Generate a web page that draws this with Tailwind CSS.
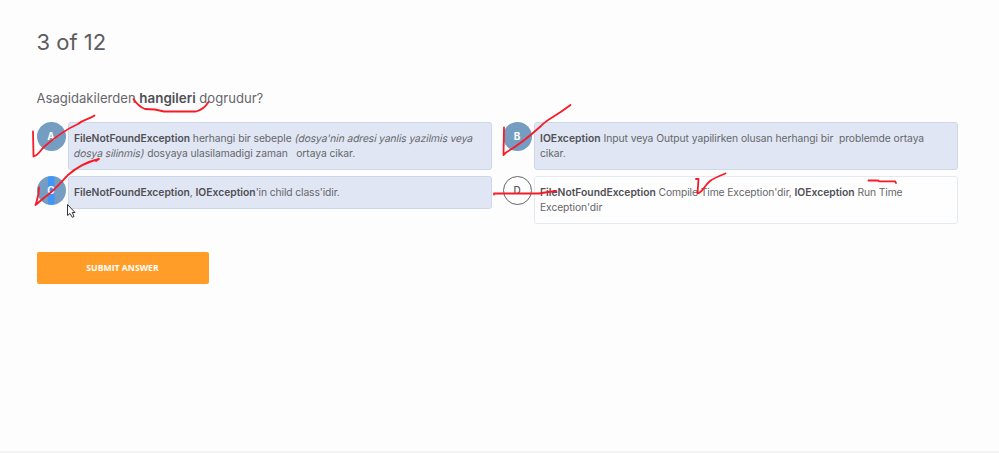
<!DOCTYPE html>
<html lang="tr">
<head>
<meta charset="utf-8">
<title>Quiz</title>
<script src="https://cdn.jsdelivr.net/npm/@tailwindcss/browser@4"></script>
</head>
<body class="bg-[#fdfdfd] font-['Inter',sans-serif] text-[#66666b]">
<main class="relative flex h-[453px] w-[999px] flex-col overflow-hidden border-b-2 border-[#f4f4f4] pl-[36.500px] pr-[41px] pt-[26px]">
  <h1 class="h-8 text-[22px] leading-8 whitespace-nowrap text-[#5c5c61]">3 of 12</h1>
  <p class="mt-[30px] h-5 text-[13.1px] leading-5 whitespace-nowrap">Asagidakilerden <b class="text-[13.4px] font-semibold text-[#505055]">hangileri</b> dogrudur?</p>

  <section class="mt-[14px] grid grid-cols-[455.500px_455.500px] gap-x-[10.500px] gap-y-[6px] text-[10.3px] leading-[14.5px] tracking-[-0.055px]">
    <div class="flex items-start gap-[2.500px]">
      <span class="flex size-[29px] shrink-0 items-center justify-center rounded-full bg-[#749dc1] text-[10px] font-bold text-white">A</span>
      <div class="h-12 flex-1 rounded-[3px] border border-[#cbd8e8] bg-[#e0e6f3] pl-[5px] pt-[8px] whitespace-nowrap"><b class="font-semibold tracking-[0.02px] text-[#505055]">FileNotFoundException</b> herhangi bir sebeple <i class="inline-block -skew-x-12 not-italic tracking-[-0.11px]">(dosya'nin adresi yanlis yazilmis veya</i><br><i class="inline-block -skew-x-12 not-italic tracking-[-0.11px]">dosya silinmis)</i> dosyaya ulasilamadigi zaman &nbsp; ortaya cikar.</div>
    </div>
    <div class="flex items-start gap-[2.500px]">
      <span class="flex size-[29px] shrink-0 items-center justify-center rounded-full bg-[#749dc1] text-[10px] font-bold text-white">B</span>
      <div class="h-12 flex-1 rounded-[3px] border border-[#cbd8e8] bg-[#e0e6f3] pl-[5px] pt-[8px] whitespace-nowrap"><b class="font-semibold tracking-[0.05px] text-[#505055]">IOException</b> Input veya Output yapilirken olusan herhangi bir &nbsp;problemde ortaya<br>cikar.</div>
    </div>
    <div class="flex items-start gap-[2.500px]">
      <span class="flex size-[29px] shrink-0 items-center justify-center rounded-full bg-[linear-gradient(90deg,#749dc1_36%,#4294f5_39%,#4294f5_59%,#749dc1_62%)] text-[10px] font-bold text-white">C</span>
      <div class="h-[33px] flex-1 rounded-[3px] border border-[#cbd8e8] bg-[#e0e6f3] pl-[5px] pt-[8px] tracking-[-0.11px] whitespace-nowrap"><b class="font-semibold tracking-[0.01px] text-[#505055]">FileNotFoundException</b>, <b class="font-semibold tracking-[0.01px] text-[#505055]">IOException</b>'in child class'idir.</div>
    </div>
    <div class="flex items-start gap-[2.500px]">
      <span class="flex size-[29px] shrink-0 items-center justify-center rounded-full border border-[#65656a] text-[10px] font-medium text-[#55555a]">D</span>
      <div class="h-12 flex-1 rounded-[3px] border border-[#e4eaf2] bg-[#fefefe] pl-[5px] pt-[8px] tracking-[-0.1px] whitespace-nowrap"><b class="font-semibold tracking-[0.01px] text-[#505055]">FileNotFoundException</b> Compile Time Exception'dir, <b class="font-semibold tracking-[0.01px] text-[#505055]">IOException</b> Run Time<br>Exception'dir</div>
    </div>
  </section>

  <button class="mt-[28px] h-8 w-[172px] rounded-[2px] bg-[#ff9d28] pt-px font-['Open_Sans',sans-serif] text-[8.7px] font-bold text-white">SUBMIT ANSWER</button>

  <!-- Pen annotations and pointer -->
  <svg class="pointer-events-none absolute left-0 top-0" width="999" height="453" viewBox="0 0 999 453" fill="none">
    <g stroke="#f91a28" stroke-width="1.8" stroke-linecap="round" stroke-linejoin="round">
      <path d="M133.500 99 C136 103 140 107 145 109 L155 109.500 L164 111.500 H196 C202 110 206 106 208.500 102"/>
      <path d="M33 131.500 L33.500 156.500 C39 155 40 150 45 146 C59 134 69 128 78 124 C84 119 90 119 94.500 115.500"/>
      <path d="M39 187.500 C39 196 37 200 35.500 205 L45 197 C53 192 62 181 68 175 C77 167 86 162 99 159 L96 161"/>
      <path d="M504 127.500 L503.500 155 L506 152.500 C519 145 531 135 541 126 C547 119 552 119 570.500 105"/>
      <path d="M494 194.500 V193.500 H539 L545 192.500 L556 191"/>
      <path d="M696 179 H698.500 L697.500 193.500 C703 192 703 187 710 181 Q714 178 725.500 173.500"/>
      <path d="M868.500 180.500 H878 L879 181.300 H895 L896 183"/>
    </g>
    <path d="M67.500 204.500 V215.500 L70 213.500 L72.300 217.300 L74 216.500 L72.300 212.500 H75 Z" fill="#fff" stroke="#33333c" stroke-width="1"/>
  </svg>
</main>
</body>
</html>
